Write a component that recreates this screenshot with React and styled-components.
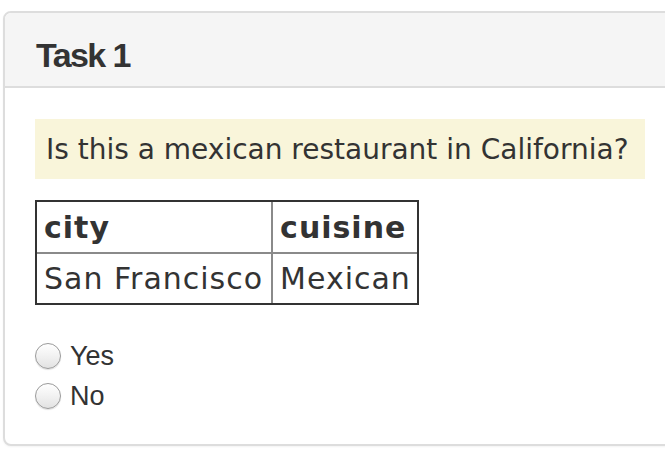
import React from 'react';
import styled, { createGlobalStyle } from 'styled-components';

const GlobalStyle = createGlobalStyle`
  body {
    margin: 0;
    background: #ffffff;
    color: #333333;
    font-family: "Liberation Sans", Arial, sans-serif;
  }
`;

const Page = styled.div`
  padding: 11px 0 0 3px;
  overflow: hidden;
  height: 464px;
  box-sizing: border-box;
`;

const Panel = styled.section`
  width: 720px;
  border: 2px solid #dddddd;
  border-radius: 8px;
  background: #ffffff;
  box-shadow: 0 1px 2px rgba(0, 0, 0, 0.05);
`;

const PanelHeading = styled.header`
  height: 75px;
  box-sizing: border-box;
  padding: 25px 0 0 31px;
  background: #f5f5f5;
  border-bottom: 2px solid #dddddd;
  border-radius: 6px 6px 0 0;
`;

const PanelTitle = styled.h3`
  margin: 0;
  font-family: "Liberation Sans", Arial, sans-serif;
  font-size: 34px;
  font-weight: bold;
  letter-spacing: -1.6px;
  line-height: 34px;
  color: #333333;
`;

const PanelBody = styled.div`
  padding: 31px 30px 35px 30px;
`;

const Question = styled.div`
  width: 610px;
  height: 60px;
  box-sizing: border-box;
  padding: 0 0 0 11px;
  display: flex;
  align-items: center;
  background: #f9f5da;
  font-family: "DejaVu Sans", Verdana, sans-serif;
  font-size: 28px;
  color: #333333;
`;

const DataTable = styled.table`
  margin-top: 21px;
  border-collapse: separate;
  border-spacing: 0;
  border: 2px solid #333333;
  font-family: "DejaVu Sans", Verdana, sans-serif;
  font-size: 30px;
  letter-spacing: 1px;
  color: #333333;
`;

const HeadCell = styled.th`
  height: 50px;
  padding: 0 ${(p) => (p.$first ? 8 : 6)}px 0 7px;
  text-align: left;
  font-weight: bold;
  border-bottom: 2px solid #8a8a8a;
  & + & {
    border-left: 2px solid #8a8a8a;
  }
`;

const Cell = styled.td`
  height: 49px;
  padding: 0 ${(p) => (p.$first ? 8 : 6)}px 0 7px;
  & + & {
    border-left: 2px solid #8a8a8a;
  }
`;

const Choices = styled.div`
  margin-top: 38px;
  display: flex;
  flex-direction: column;
  gap: 14px;
`;

const Choice = styled.label`
  display: flex;
  align-items: center;
  gap: 9px;
  font-family: "Liberation Sans", Arial, sans-serif;
  font-size: 27px;
  line-height: 26px;
  color: #333333;
`;

const Radio = styled.input`
  appearance: none;
  margin: 0;
  width: 26px;
  height: 26px;
  border-radius: 50%;
  border: 1px solid #9a9a9a;
  background: linear-gradient(#ffffff, #f0f0f0 55%, #e2e2e2);
  box-shadow: inset 0 1px 1px rgba(255, 255, 255, 0.9), 0 1px 1px rgba(0, 0, 0, 0.12);
  box-sizing: border-box;
`;

export default function App() {
  return (
    <Page>
      <GlobalStyle />
      <Panel>
        <PanelHeading>
          <PanelTitle>Task 1</PanelTitle>
        </PanelHeading>
        <PanelBody>
          <Question>Is this a mexican restaurant in California?</Question>
          <DataTable>
            <thead>
              <tr>
                <HeadCell $first>city</HeadCell>
                <HeadCell>cuisine</HeadCell>
              </tr>
            </thead>
            <tbody>
              <tr>
                <Cell $first>San Francisco</Cell>
                <Cell>Mexican</Cell>
              </tr>
            </tbody>
          </DataTable>
          <Choices>
            <Choice>
              <Radio type="radio" name="answer" value="yes" />
              Yes
            </Choice>
            <Choice>
              <Radio type="radio" name="answer" value="no" />
              No
            </Choice>
          </Choices>
        </PanelBody>
      </Panel>
    </Page>
  );
}
